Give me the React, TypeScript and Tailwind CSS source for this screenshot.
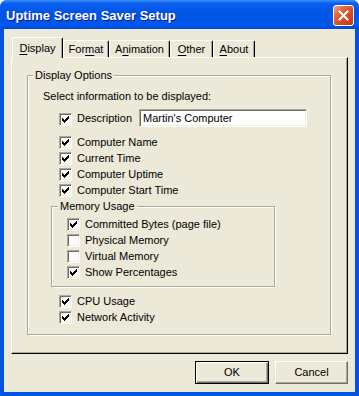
import React from "react";

const sunken =
  "border border-t-[#aca899] border-l-[#aca899] border-r-white border-b-white shadow-[inset_1px_1px_0_#716f64,inset_-1px_-1px_0_#f1efe2]";

const CheckBox = ({ checked }: { checked?: boolean }) => (
  <span className={`flex h-[13px] w-[13px] shrink-0 items-center justify-center bg-white ${sunken}`}>
    {checked && (
      <svg width="7" height="7" viewBox="0 0 7 7" shapeRendering="crispEdges">
        <path
          d="M6 0h1v1h-1z M5 1h2v1h-2z M0 2h1v1h-1z M4 2h3v1h-3z M0 3h2v1h-2z M3 3h3v1h-3z M0 4h5v1h-5z M1 5h3v1h-3z M2 6h1v1h-1z"
          fill="#000"
        />
      </svg>
    )}
  </span>
);

const Option = ({ label, checked }: { label: string; checked?: boolean }) => (
  <div className="flex h-[13px] items-center">
    <CheckBox checked={checked} />
    <span className="ml-[5px] whitespace-nowrap leading-[13px]">{label}</span>
  </div>
);

const tabs = [
  { a: "", u: "D", b: "isplay", w: "w-[51px]", on: true },
  { a: "For", u: "m", b: "at", w: "w-[46px]" },
  { a: "A", u: "n", b: "imation", w: "w-[61px]" },
  { a: "", u: "O", b: "ther", w: "w-[43px]" },
  { a: "", u: "A", b: "bout", w: "w-[42px]" },
];

const App = () => {
  return (
    <div className="flex h-[396px] w-[359px] flex-col overflow-hidden rounded-t-[7px] bg-[#0054e3] font-['Liberation_Sans',Arial,sans-serif] text-[11px] text-black">
      {/* title bar */}
      <div className="flex h-[29px] shrink-0 items-center justify-between bg-[linear-gradient(to_bottom,#3c8ef8_0%,#0a5ff0_12%,#0054e3_45%,#0058ec_85%,#0048d6_100%)] pl-[6px] pr-[5px]">
        <span className="pt-[2px] text-[13px] font-bold leading-[16px] text-white [text-shadow:1px_1px_0_#0a1a8a]">
          Uptime Screen Saver Setup
        </span>
        <button className="mt-[1px] flex h-[21px] w-[21px] items-center justify-center rounded-[3px] border border-white bg-[linear-gradient(135deg,#f4a78f_0%,#e2673f_30%,#d4461f_70%,#c13510_100%)]">
          <svg width="11" height="11" viewBox="0 0 11 11">
            <path d="M1.5 1.5l8 8M9.5 1.5l-8 8" stroke="#fff" strokeWidth="2" strokeLinecap="square" />
          </svg>
        </button>
      </div>

      {/* body */}
      <div className="mx-[4px] mb-[4px] flex flex-1 flex-col bg-[#ece9d8] pl-[7px] pt-[8px]">
        {/* tabs */}
        <div className="flex h-[20px] items-end pl-[1px]">
          {tabs.map((t) =>
            t.on ? (
              <div
                key={t.u + t.b}
                className={`relative z-10 -mb-px flex h-[21px] ${t.w} items-center justify-center rounded-t-[2px] border-l border-r border-t border-l-white border-r-black border-t-white bg-[#ece9d8] pt-[1px] shadow-[inset_-1px_0_0_#aca899]`}
              >
                <span>
                  {t.a}
                  <span className="underline underline-offset-[2px]">{t.u}</span>
                  {t.b}
                </span>
              </div>
            ) : (
              <div
                key={t.u + t.b}
                className={`flex h-[17px] ${t.w} items-center justify-center rounded-t-[2px] border-l border-r border-t border-l-white border-r-black border-t-white pt-[1px] shadow-[inset_-1px_0_0_#aca899]`}
              >
                <span>
                  {t.a}
                  <span className="underline underline-offset-[2px]">{t.u}</span>
                  {t.b}
                </span>
              </div>
            )
          )}
        </div>

        {/* tab page */}
        <div className="h-[297px] w-[337px] border border-b-black border-l-white border-r-black border-t-white shadow-[inset_-1px_-1px_0_#aca899]">
          <div className="relative ml-[15px] mt-[17px] h-[260px] w-[304px] border border-[#aca899] shadow-[inset_1px_1px_0_#fff,1px_1px_0_#fff]">
            <span className="absolute left-[5px] top-[-7px] bg-[#ece9d8] px-[2px] leading-[13px]">
              Display Options
            </span>
            <div className="flex flex-col pl-[15px]">
              <div className="mt-[14px] h-[13px] leading-[13px]">Select information to be displayed:</div>

              <div className="mt-[6px] flex h-[18px] items-start pl-[16px]">
                <span className="mt-[4px]">
                  <CheckBox checked />
                </span>
                <span className="ml-[5px] mt-[3px] w-[62px] leading-[13px]">Description</span>
                <div className={`flex h-[18px] w-[168px] items-center bg-white pl-[3px] ${sunken}`}>
                  Martin's Computer
                </div>
              </div>

              <div className="mt-[9px] flex flex-col gap-[3px] pl-[16px]">
                <Option label="Computer Name" checked />
                <Option label="Current Time" checked />
                <Option label="Computer Uptime" checked />
                <Option label="Computer Start Time" checked />
              </div>

              <div className="relative ml-[8px] mt-[9px] h-[81px] w-[224px] border border-[#aca899] shadow-[inset_1px_1px_0_#fff,1px_1px_0_#fff]">
                <span className="absolute left-[6px] top-[-7px] bg-[#ece9d8] px-[2px] leading-[13px]">
                  Memory Usage
                </span>
                <div className="mt-[11px] flex flex-col gap-[3px] pl-[15px]">
                  <Option label="Committed Bytes (page file)" checked />
                  <Option label="Physical Memory" />
                  <Option label="Virtual Memory" />
                  <Option label="Show Percentages" checked />
                </div>
              </div>

              <div className="mt-[8px] flex flex-col gap-[3px] pl-[16px]">
                <Option label="CPU Usage" checked />
                <Option label="Network Activity" checked />
              </div>
            </div>
          </div>
        </div>

        {/* buttons */}
        <div className="mt-[7px] flex w-[337px] justify-end gap-[6px]">
          <button className="flex h-[23px] w-[74px] items-center justify-center border border-black shadow-[inset_1px_1px_0_#fff,inset_-1px_-1px_0_#716f64,inset_-2px_-2px_0_#aca899]">
            OK
          </button>
          <button className="flex h-[23px] w-[73px] items-center justify-center border border-b-[#716f64] border-l-white border-r-[#716f64] border-t-white shadow-[inset_-1px_-1px_0_#aca899]">
            Cancel
          </button>
        </div>
      </div>
    </div>
  );
};

export default App;
